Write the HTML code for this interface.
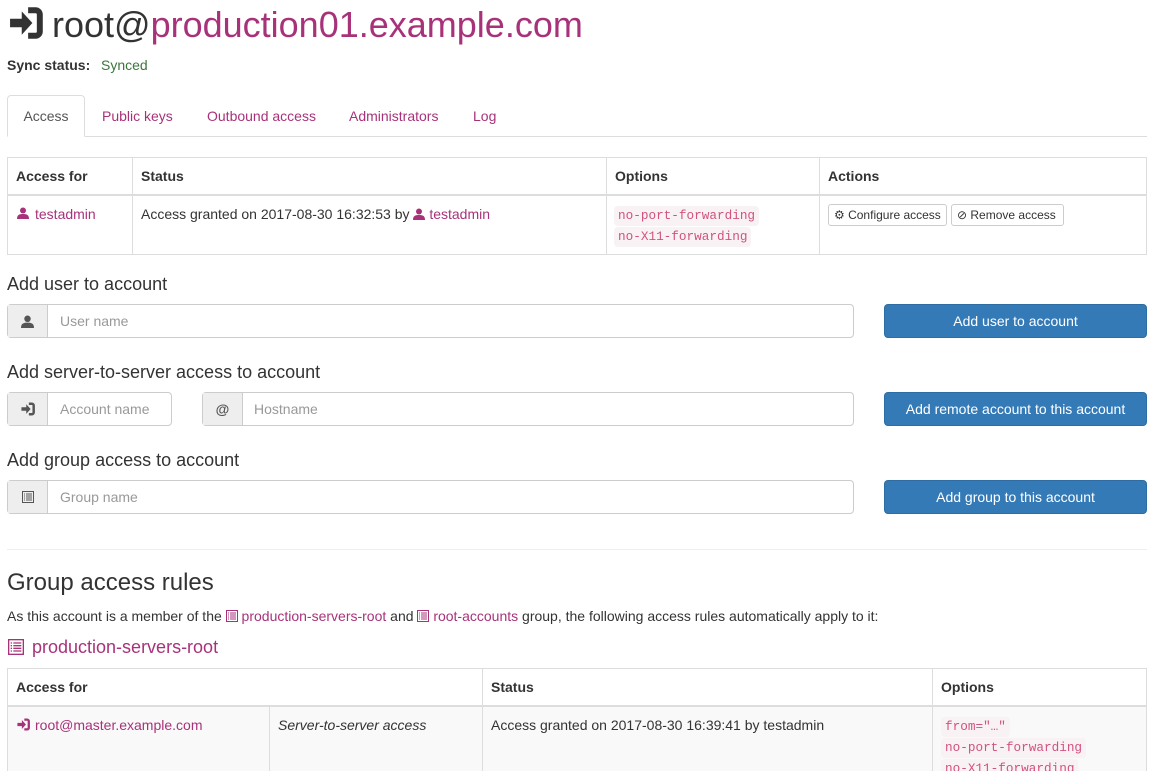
<!DOCTYPE html>
<html style="overflow:hidden;width:1155px;height:771px"><head><meta charset="utf-8"><style>
*{box-sizing:border-box;margin:0;padding:0}
body{width:1155px;height:771px;overflow:hidden;background:#fff;font-family:"Liberation Sans",sans-serif;font-size:14px;color:#333;position:relative}
.a{position:absolute}
a,.lk{color:#a8327a;text-decoration:none}
.th{position:absolute;font-weight:bold}
.vl{position:absolute;width:1px;background:#ddd}
.hl{position:absolute;height:1px;background:#ddd}
code{font-family:"Liberation Mono",monospace;font-size:12.7px;color:#d0527f;background:#f9f2f4;padding:2px 4px;border-radius:4px;position:absolute;line-height:16px}
.h3{position:absolute;font-size:18px;color:#333}
.ig{position:absolute;height:34px;border:1px solid #ccc;border-radius:4px;background:#fff}
.ad{position:absolute;left:0;top:0;bottom:0;width:40px;background:#eee;border-right:1px solid #ccc;display:flex;align-items:center;justify-content:center}
.ph{position:absolute;top:8px;color:#999;font-size:14px}
.btn{position:absolute;height:34px;background:#337ab7;border:1px solid #2e6da4;border-radius:4px;color:#fff;text-align:center;line-height:32px;font-size:14px}
.sb{position:absolute;height:22px;border:1px solid #ccc;border-radius:3px;font-size:12px;line-height:20px;padding:0 5px;color:#333;background:#fff}
</style></head><body>
<svg width="0" height="0" style="position:absolute"><defs>
<symbol id="lg" viewBox="0 0 16 16"><path d="M0.5 6h5.5V2.5l5 5.5-5 5.5V10H0.5z" fill="currentColor"/><path d="M9 2h3.5a2 2 0 0 1 2 2v8a2 2 0 0 1-2 2H9" fill="none" stroke="currentColor" stroke-width="2.8"/></symbol>
<symbol id="gr" viewBox="0 0 12 12"><rect x="0.5" y="0.5" width="11" height="11" fill="none" stroke="currentColor"/><path d="M2 3h1M4 3h6M2 5h1M4 5h6M2 7h1M4 7h6M2 9h1M4 9h6" stroke="currentColor" stroke-width="1"/></symbol>
<symbol id="us" viewBox="0 0 12 12"><circle cx="6" cy="3.5" r="3" fill="currentColor"/><path d="M0 12c0-4 2-5 6-5s6 1 6 5z" fill="currentColor"/></symbol>
</defs></svg>

<svg class="a" style="left:6px;top:6px;color:#333" width="40" height="34"><use href="#lg"/></svg>
<div class="a" style="left:52px;top:4px;font-size:36px;line-height:42px;color:#333">root@<span class="lk">production01.example.com</span></div>
<div class="a" style="left:7px;top:57px;font-weight:bold">Sync status:</div>
<div class="a" style="left:101px;top:57px;color:#3c763d">Synced</div>

<div class="hl" style="left:7px;top:136px;width:1140px"></div>
<div class="a" style="left:7px;top:95px;width:78px;height:42px;border:1px solid #ddd;border-bottom-color:#fff;border-radius:4px 4px 0 0;background:#fff;text-align:center;line-height:40px;color:#555">Access</div>
<a class="a" style="left:102px;top:108px">Public keys</a>
<a class="a" style="left:207px;top:108px">Outbound access</a>
<a class="a" style="left:349px;top:108px">Administrators</a>
<a class="a" style="left:473px;top:108px">Log</a>

<div class="a" style="left:7px;top:157px;width:1140px;height:98px;border:1px solid #ddd"></div>
<div class="hl" style="left:7px;top:194px;width:1140px;height:2px"></div>
<div class="vl" style="left:132px;top:157px;height:98px"></div>
<div class="vl" style="left:606px;top:157px;height:98px"></div>
<div class="vl" style="left:819px;top:157px;height:98px"></div>
<div class="th" style="left:16px;top:168px">Access for</div>
<div class="th" style="left:141px;top:168px">Status</div>
<div class="th" style="left:615px;top:168px">Options</div>
<div class="th" style="left:828px;top:168px">Actions</div>
<svg class="a" style="left:17px;top:207px;color:#a8327a" width="12" height="12"><use href="#us"/></svg>
<a class="a" style="left:35px;top:206px">testadmin</a>
<div class="a" style="left:141px;top:206px">Access granted on 2017-08-30 16:32:53 by <svg style="color:#a8327a;vertical-align:-1px" width="12" height="12"><use href="#us"/></svg> <span class="lk">testadmin</span></div>
<code style="left:614px;top:206px">no-port-forwarding</code>
<code style="left:614px;top:227px">no-X11-forwarding</code>
<div class="sb" style="left:828px;top:204px;width:119px">&#9881; Configure access</div>
<div class="sb" style="left:951px;top:204px;width:113px">&#8856; Remove access</div>

<div class="h3" style="left:7px;top:274px">Add user to account</div>
<div class="ig" style="left:7px;top:304px;width:847px"><div class="ad"><svg width="13" height="13" style="color:#555"><use href="#us"/></svg></div><span class="ph" style="left:52px">User name</span></div>
<div class="btn" style="left:884px;top:304px;width:263px">Add user to account</div>

<div class="h3" style="left:7px;top:362px">Add server-to-server access to account</div>
<div class="ig" style="left:7px;top:392px;width:165px"><div class="ad"><svg width="16" height="14" style="color:#555"><use href="#lg"/></svg></div><span class="ph" style="left:52px">Account name</span></div>
<div class="ig" style="left:202px;top:392px;width:652px"><div class="ad" style="font-weight:bold;color:#555">@</div><span class="ph" style="left:51px">Hostname</span></div>
<div class="btn" style="left:884px;top:392px;width:263px">Add remote account to this account</div>

<div class="h3" style="left:7px;top:450px">Add group access to account</div>
<div class="ig" style="left:7px;top:480px;width:847px"><div class="ad"><svg width="12" height="12" style="color:#555"><use href="#gr"/></svg></div><span class="ph" style="left:52px">Group name</span></div>
<div class="btn" style="left:884px;top:480px;width:263px">Add group to this account</div>

<div class="hl" style="left:7px;top:549px;width:1140px;background:#eee"></div>
<div class="a" style="left:7px;top:569px;font-size:24px">Group access rules</div>
<div class="a" style="left:7px;top:608px">As this account is a member of the <svg style="color:#a8327a;vertical-align:-1px" width="12" height="12"><use href="#gr"/></svg> <span class="lk">production-servers-root</span> and <svg style="color:#a8327a;vertical-align:-1px" width="12" height="12"><use href="#gr"/></svg> <span class="lk">root-accounts</span> group, the following access rules automatically apply to it:</div>
<svg class="a" style="left:8px;top:639px;color:#a8327a" width="16" height="16"><use href="#gr"/></svg>
<div class="a lk" style="left:32px;top:637px;font-size:18px">production-servers-root</div>

<div class="a" style="left:7px;top:668px;width:1140px;height:103px;border:1px solid #ddd;border-bottom:0;overflow:hidden"></div>
<div class="a" style="left:8px;top:707px;width:1138px;height:64px;background:#f9f9f9"></div>
<div class="hl" style="left:7px;top:705px;width:1140px;height:2px"></div>
<div class="vl" style="left:269px;top:706px;height:65px"></div>
<div class="vl" style="left:482px;top:668px;height:103px"></div>
<div class="vl" style="left:932px;top:668px;height:103px"></div>
<div class="th" style="left:16px;top:679px">Access for</div>
<div class="th" style="left:491px;top:679px">Status</div>
<div class="th" style="left:941px;top:679px">Options</div>
<svg class="a" style="left:16px;top:718px;color:#a8327a" width="15" height="13"><use href="#lg"/></svg>
<a class="a" style="left:35px;top:717px">root@master.example.com</a>
<div class="a" style="left:278px;top:717px;font-style:italic">Server-to-server access</div>
<div class="a" style="left:491px;top:717px">Access granted on 2017-08-30 16:39:41 by testadmin</div>
<code style="left:941px;top:717px">from="…"</code>
<code style="left:941px;top:738px">no-port-forwarding</code>
<div class="a" style="left:933px;top:759px;width:213px;height:12px;overflow:hidden"><code style="left:8px;top:0">no-X11-forwarding</code></div>
</body></html>
